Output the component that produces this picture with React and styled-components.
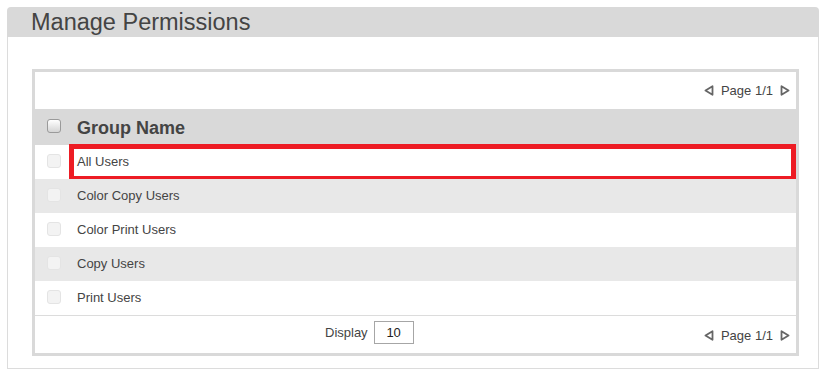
import React from "react";
import styled, { createGlobalStyle } from "styled-components";

const Global = createGlobalStyle`
  html, body { margin: 0; padding: 0; background: #fff; }
  body { font-family: "Liberation Sans", Arial, sans-serif; color: #444; }
`;

const Panel = styled.div`
  margin: 7px 0 0 7px;
  width: 812px;
  box-sizing: border-box;
`;

const PanelHeader = styled.div`
  height: 30px;
  background: #d9d9d9;
  border-radius: 4px 4px 0 0;
  padding-left: 24px;
  display: flex;
  align-items: center;
`;

const Title = styled.h1`
  margin: 0;
  font-size: 23.5px;
  font-weight: normal;
  color: #444;
  line-height: 30px;
`;

const PanelBody = styled.div`
  border: 1px solid #dcdcdc;
  border-top: none;
  padding: 32px 19px 12px 24px;
`;

const TableBox = styled.div`
  border: 3px solid #d9d9d9;
  background: #fff;
  display: flex;
  flex-direction: column;
`;

const PagerRow = styled.div`
  height: 37px;
  display: flex;
  align-items: center;
  justify-content: flex-end;
  padding-right: 6px;
  font-size: 13px;
  color: #444;
`;

const Pager = styled.div`
  display: flex;
  align-items: center;
  gap: 7px;
`;

const Arrow = styled.svg`
  width: 10px;
  height: 11px;
  display: block;
`;

const HeaderRow = styled.div`
  height: 36px;
  background: #d9d9d9;
  display: flex;
  align-items: center;
`;

const Row = styled.div`
  height: 34px;
  box-sizing: border-box;
  padding-bottom: 2px;
  background: ${(p) => (p.$alt ? "#e8e8e8" : "#fff")};
  display: flex;
  align-items: center;
  position: relative;
  font-size: 13px;
  color: #444;
`;

const Check = styled.span`
  width: 14px;
  height: 14px;
  box-sizing: border-box;
  border-radius: 3px;
  margin: 0 16px 0 12px;
  display: block;
  flex: none;
  border: 1px solid ${(p) => (p.$head ? "#9a9a9a" : "#e4e4e4")};
  background: ${(p) =>
    p.$head ? "linear-gradient(#ffffff, #d4d4d4)" : "#f3f3f3"};
  ${(p) => p.$head && "margin-bottom: 2px;"}
`;

const HeadLabel = styled.span`
  font-size: 18px;
  font-weight: bold;
  color: #444;
  margin-top: 2px;
`;

const Label = styled.span``;

const Highlight = styled.div`
  position: absolute;
  left: 34px;
  right: 0;
  top: -1px;
  bottom: -2px;
  border: 5px solid #ed1c24;
  pointer-events: none;
`;

const Footer = styled.div`
  height: 37px;
  border-top: 1px solid #dcdcdc;
  display: flex;
  align-items: center;
  position: relative;
  font-size: 13px;
`;

const DisplayGroup = styled.div`
  position: absolute;
  left: 290px;
  top: 5px;
  display: flex;
  align-items: center;
  gap: 6px;
`;

const DisplayInput = styled.div`
  width: 40px;
  height: 23px;
  box-sizing: border-box;
  border: 1px solid #a6a6a6;
  display: flex;
  align-items: center;
  justify-content: center;
  font-size: 13px;
  color: #222;
`;

const FooterPager = styled.div`
  margin-left: auto;
  padding-right: 6px;
  margin-top: 2px;
`;

const LeftArrow = () => (
  <Arrow viewBox="0 0 10 11">
    <polygon points="8.5,1.2 1.5,5.5 8.5,9.8" fill="none" stroke="#666" strokeWidth="1.8" strokeLinejoin="round" />
  </Arrow>
);

const RightArrow = () => (
  <Arrow viewBox="0 0 10 11">
    <polygon points="1.5,1.2 8.5,5.5 1.5,9.8" fill="none" stroke="#666" strokeWidth="1.8" strokeLinejoin="round" />
  </Arrow>
);

const PageNav = () => (
  <Pager>
    <LeftArrow />
    <span>Page 1/1</span>
    <RightArrow />
  </Pager>
);

const groups = [
  "All Users",
  "Color Copy Users",
  "Color Print Users",
  "Copy Users",
  "Print Users",
];

export default function App() {
  return (
    <>
      <Global />
      <Panel>
        <PanelHeader>
          <Title>Manage Permissions</Title>
        </PanelHeader>
        <PanelBody>
          <TableBox>
            <PagerRow>
              <PageNav />
            </PagerRow>
            <HeaderRow>
              <Check $head />
              <HeadLabel>Group Name</HeadLabel>
            </HeaderRow>
            {groups.map((g, i) => (
              <Row key={g} $alt={i % 2 === 1}>
                <Check />
                <Label>{g}</Label>
                {i === 0 && <Highlight />}
              </Row>
            ))}
            <Footer>
              <DisplayGroup>
                <span>Display</span>
                <DisplayInput>10</DisplayInput>
              </DisplayGroup>
              <FooterPager>
                <PageNav />
              </FooterPager>
            </Footer>
          </TableBox>
        </PanelBody>
      </Panel>
    </>
  );
}
